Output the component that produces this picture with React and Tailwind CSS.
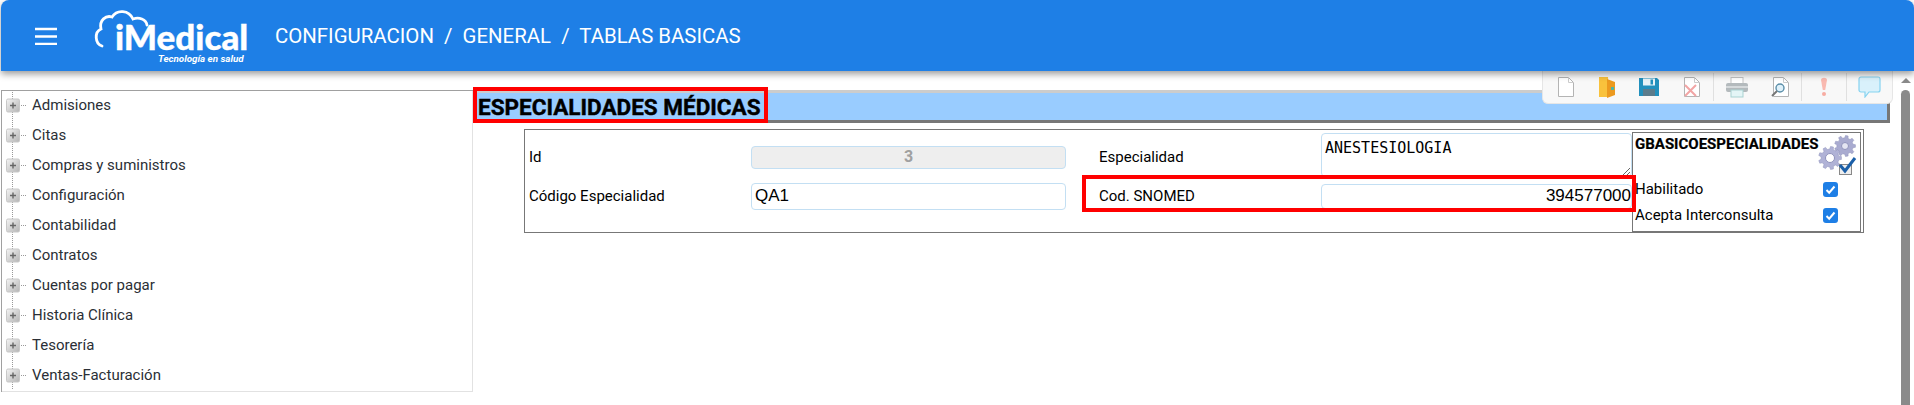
import React from 'react';

const MENU = ['Admisiones', 'Citas', 'Compras y suministros', 'Configuración', 'Contabilidad', 'Contratos', 'Cuentas por pagar', 'Historia Clínica', 'Tesorería', 'Ventas-Facturación'];

const Expander = () => (
    <svg width="30" height="30" viewBox="0 0 30 30" className="shrink-0">
        <defs>
            <linearGradient id="exp" x1="0" y1="0" x2="1" y2="1">
                <stop offset="0" stopColor="#f4f4f4" />
                <stop offset="1" stopColor="#b4b4b4" />
            </linearGradient>
        </defs>
        <line x1="7.5" y1="0" x2="7.5" y2="30" stroke="#999" strokeDasharray="1 1" />
        <line x1="16" y1="15.5" x2="21" y2="15.5" stroke="#999" strokeDasharray="1 1" />
        <rect x="1.5" y="9" width="13" height="13" rx="1.5" fill="url(#exp)" stroke="#c8c8c8" />
        <path d="M5 15.5h6M8 12.5v6" stroke="#666" strokeWidth="1.4" />
    </svg>
);

const Logo = () => (
    <div className="ml-[31px] w-[186px] h-[60px] relative shrink-0">
        <svg width="60" height="46" viewBox="0 0 60 46" fill="none" className="absolute left-[2px] top-0">
            <path d="M12 40C5 38 4 26 11 23C9 14 16 9 22 11C27 3 39 4 43 13C49 11 56 13 57 19" stroke="white" strokeWidth="2.8" strokeLinecap="round" />
        </svg>
        <span className="absolute left-[27px] top-[15px] font-['Lato'] font-black text-[35px] leading-[30px] text-white [-webkit-text-stroke:0.4px_white]">iMedical</span>
        <span className="absolute left-[70px] top-[47px] font-['Roboto'] font-bold italic text-[9.8px] leading-[11px] whitespace-nowrap text-white">Tecnología en salud</span>
    </div>
);

const DocIcon = ({ children }) => (
    <svg width="22" height="22" viewBox="0 0 22 22" fill="none">
        <path d="M3.5 1.5h10l5 5v14h-15z" fill="#fff" stroke="#b4b4b4" />
        <path d="M13.5 1.5v5h5" stroke="#cccccc" />
        {children}
    </svg>
);

const Sep = () => <div className="w-px h-[28px] bg-[#e0e0e0] shrink-0" />;

const Cell = ({ w, children }) => <div className={`${w} flex justify-center shrink-0`}>{children}</div>;

const Toolbar = () => (
    <div className="absolute right-[21px] top-[71px] w-[351px] h-[33px] bg-[#f8f8f8] rounded-b-md border border-t-0 border-[#e6e6e6] flex items-center pl-[2px] z-10">
        <Cell w="w-[42px]"><DocIcon /></Cell>
        <Cell w="w-[40px]">
            <svg width="22" height="22" viewBox="0 0 22 22">
                <path d="M3 1h9l1 20H3z" fill="#f9c23c" />
                <path d="M11 3l8 3v13l-8 3z" fill="#ec9a1f" />
                <rect x="15" y="11" width="3" height="3" fill="#4cb6a6" />
            </svg>
        </Cell>
        <Cell w="w-[43px]">
            <svg width="22" height="22" viewBox="0 0 22 22">
                <path d="M1 2h18l2 2v16H1z" fill="#2290bd" />
                <rect x="5" y="2.5" width="12" height="7" fill="#e7f2f7" />
                <rect x="12.5" y="3.5" width="2.5" height="5" fill="#2290bd" />
                <rect x="5" y="13" width="12" height="7" fill="#5c7c8c" />
            </svg>
        </Cell>
        <Cell w="w-[43px]">
            <DocIcon>
                <path d="M4 9l11 11M15 9L4 20" stroke="#f2a5a5" strokeWidth="2" />
            </DocIcon>
        </Cell>
        <Sep />
        <Cell w="w-[46px]">
            <svg width="24" height="22" viewBox="0 0 24 22">
                <rect x="6" y="1.5" width="12" height="7" fill="#fff" stroke="#c4c4c4" />
                <rect x="1" y="7" width="22" height="9" rx="2" fill="#b4babd" />
                <rect x="1" y="10" width="22" height="2" fill="#d6dadc" />
                <rect x="6" y="14" width="12" height="7" fill="#e4f5f6" stroke="#a9d2d2" />
            </svg>
        </Cell>
        <Cell w="w-[41px]">
            <DocIcon>
                <circle cx="10" cy="12" r="4" fill="#dff1fa" stroke="#5b8ea8" strokeWidth="1.4" />
                <path d="M7 15l-5 5" stroke="#777" strokeWidth="2" />
            </DocIcon>
        </Cell>
        <Sep />
        <Cell w="w-[44px]">
            <svg width="8" height="20" viewBox="0 0 8 20">
                <path d="M1 3c0-3 6-3 6 0l-1.8 10H2.8z" fill="#f9b9b0" />
                <circle cx="4" cy="17" r="2" fill="#f7aca2" />
            </svg>
        </Cell>
        <Sep />
        <Cell w="w-[44px]">
            <svg width="23" height="22" viewBox="0 0 23 22">
                <path d="M3 1h17a2 2 0 0 1 2 2v11a2 2 0 0 1-2 2H11l-4 5v-5H3a2 2 0 0 1-2-2V3a2 2 0 0 1 2-2z" fill="#d9f1fb" stroke="#86d3f0" strokeWidth="1.2" />
            </svg>
        </Cell>
    </div>
);

// gear outline with square teeth
const gearPath = (cx, cy, r, teeth) => {
    const pts = [];
    const step = (Math.PI * 2) / teeth;
    for (let i = 0; i < teeth; i++) {
        const a = i * step;
        [[a - step * 0.3, r * 0.78], [a - step * 0.18, r], [a + step * 0.18, r], [a + step * 0.3, r * 0.78]].forEach(([t, d]) => {
            pts.push(`${(cx + d * Math.cos(t)).toFixed(2)} ${(cy + d * Math.sin(t)).toFixed(2)}`);
        });
    }
    return `M${pts.join('L')}Z`;
};

const Gears = () => (
    <svg width="38" height="38" viewBox="0 0 38 38" className="shrink-0 overflow-visible">
        <path d={gearPath(26, 10, 10.5, 9)} fill="#a9abd0" stroke="#8f92bb" strokeWidth="0.5" />
        <circle cx="26" cy="10" r="3.5" fill="#e4e5f2" stroke="#8f92bb" />
        <path d={gearPath(11, 22, 11.5, 9)} fill="#b0b2d6" stroke="#8f92bb" strokeWidth="0.5" />
        <circle cx="11" cy="22" r="4.5" fill="#fff" stroke="#8f92bb" />
        <rect x="20.5" y="28.5" width="12" height="10" fill="#eeeeee" stroke="#888888" />
        <path d="M21 29l5 6 10-13" fill="none" stroke="#1b5fa8" strokeWidth="3" />
    </svg>
);

const Check = () => (
    <div className="w-[15px] h-[15px] rounded-[3px] bg-[#1e7fe6] flex items-center justify-center">
        <svg width="11" height="11" viewBox="0 0 11 11" fill="none">
            <path d="M1.5 6l2.7 2.7L9.5 2.5" stroke="white" strokeWidth="2" />
        </svg>
    </div>
);

const Label = ({ children }) => (
    <span className="font-['Roboto'] text-[15px] text-black whitespace-nowrap">{children}</span>
);

const inputCls = "w-full border border-[#c3dff3] rounded-[4px] outline-none";

export default function App() {
    return (
        <div className="relative w-[1914px] h-[405px] overflow-hidden bg-white">
            <header className="h-[71px] ml-px bg-[#1e7fe6] rounded-t-lg shadow-[0_3px_7px_rgba(0,0,0,0.4)] flex items-center pl-[34px] relative z-20">
                <svg width="22" height="18" viewBox="0 0 22 18" className="shrink-0">
                    <path d="M0 2h22M0 9.5h22M0 17h22" stroke="white" strokeWidth="2.4" />
                </svg>
                <Logo />
                <div className="ml-px mt-[2px] font-['Roboto'] text-[20.4px] text-white whitespace-pre">CONFIGURACION  /  GENERAL  /  TABLAS BASICAS</div>
            </header>
            <Toolbar />
            <div className="flex mt-[19px]">
                <nav className="ml-px w-[472px] h-[302px] border-l border-t border-[#a0a0a0] shadow-[inset_-1px_-1px_0_#e2e2e2] pl-[3px]">
                    <div className="-mt-px">
                        {MENU.map((item) => (
                            <div key={item} className="h-[30px] flex items-center">
                                <Expander />
                                <span className="font-['Roboto'] text-[15px] text-[#2b2f36] -ml-[3px]">{item}</span>
                            </div>
                        ))}
                    </div>
                </nav>
                <main className="w-[1417px]">
                    <div className="h-[33px] bg-[#99ccff] border-t-[3px] border-t-[#cccccc] border-b-[3px] border-b-[#777777] border-r-[3px] border-r-[#777777]">
                        <h1 className="w-[295px] h-[36px] -mt-[6px] pl-[1px] pt-[2px] border-[4px] border-[#ff0000] font-['Roboto'] font-bold text-[22.5px] leading-[29px] text-black whitespace-nowrap relative [-webkit-text-stroke:0.4px_black]">ESPECIALIDADES MÉDICAS</h1>
                    </div>
                    <section className="ml-[51px] mt-[6px] w-[1340px] h-[104px] border border-[#777777] flex">
                        <div className="flex-1 grid grid-cols-[222px_315px_255px_311px] grid-rows-[48px_30px] pt-[3px] pl-[4px]">
                            <div className="flex items-center"><Label>Id</Label></div>
                            <div className="flex items-center">
                                <input readOnly value="3" className={`${inputCls} h-[23px] bg-[#eeeeee] text-center font-['Roboto'] font-bold text-[16px] text-[#a0a0a0]`} />
                            </div>
                            <div className="flex items-center pl-[33px]"><Label>Especialidad</Label></div>
                            <div className="h-[44px]">
                                <textarea readOnly value="ANESTESIOLOGIA" className={`${inputCls} h-[44px] block font-['DejaVu_Sans_Mono'] text-[15px] leading-[18px] text-black px-[3px] py-[5px]`} />
                            </div>
                            <div className="flex items-center"><Label>Código Especialidad</Label></div>
                            <div className="flex items-center">
                                <input readOnly value="QA1" className={`${inputCls} h-[27px] px-[3px] font-['Liberation_Sans'] text-[17px] text-black`} />
                            </div>
                            <div className="flex items-center pl-[33px]"><Label>Cod. SNOMED</Label></div>
                            <div className="flex items-center">
                                <input readOnly value="394577000" className={`${inputCls} h-[25px] text-right font-['Liberation_Sans'] text-[17px] text-black`} />
                            </div>
                        </div>
                        <aside className="w-[230px] h-[100px] mt-[2px] mr-[2px] border border-[#777777] pl-[2px] pr-[3px] relative">
                            <div className="flex justify-between h-[43px] pt-[3px]">
                                <span className="font-['Roboto'] font-bold text-[15px] leading-[16px] text-black [-webkit-text-stroke:0.2px_black]">GBASICOESPECIALIDADES</span>
                                <Gears />
                            </div>
                            <div className="h-[26px] flex items-center justify-between pr-[19px]"><Label>Habilitado</Label><Check /></div>
                            <div className="h-[26px] flex items-center justify-between pr-[19px]"><Label>Acepta Interconsulta</Label><Check /></div>
                        </aside>
                    </section>
                    <div className="absolute left-[1082px] top-[175px] w-[554px] h-[37px] border-[4px] border-[#ff0000] pointer-events-none" />
                </main>
            </div>
            <div className="absolute right-[4px] top-[71px] bottom-0 w-[9px] flex flex-col items-center">
                <div className="mt-[7px] w-0 h-0 border-x-[5px] border-x-transparent border-b-[5px] border-b-[#8a8a8a]" />
                <div className="mt-[7px] flex-1 w-[9px] rounded-t-[5px] bg-[#8a8a8a]" />
            </div>
        </div>
    );
}
